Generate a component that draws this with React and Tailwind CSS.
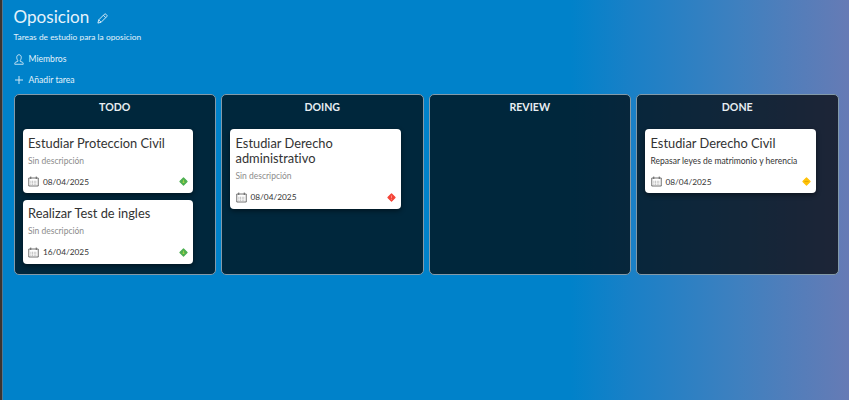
const PencilIcon = () => (
  <svg className="mt-[2px] h-[11px] w-[11px]" viewBox="0 0 24 24" fill="none" stroke="currentColor" strokeWidth="2" strokeLinejoin="round">
    <path d="M2 22 3.8 15 16 2.8Q18 1 20 3L21.2 4.2Q23 6 21.2 8L9 20.2Z" />
    <path d="M14 5 19 10M3.8 15 9 20.2" />
  </svg>
);

const PersonIcon = () => (
  <svg className="h-[11px] w-[10px]" viewBox="0 0 20 22" fill="none" stroke="currentColor" strokeWidth="1.7" strokeLinejoin="round">
    <path d="M7.5 12.5C5.800 10.500 5.500 8.500 5.500 6.500 5.500 3.500 7.300 1.500 10 1.500s4.500 2 4.500 5c0 2-.3 4-2 6v2.200l4 1.600c1.600.7 2 1.700 2 4.200h-17c0-2.500.4-3.500 2-4.200l4-1.600Z" />
  </svg>
);

const PlusIcon = () => (
  <svg className="h-[10px] w-[10px]" viewBox="0 0 10 10" fill="none" stroke="currentColor" strokeWidth="0.9">
    <path d="M5 1v8M1 5h8" />
  </svg>
);

const CalendarIcon = () => (
  <svg className="h-[11px] w-[11px] shrink-0 text-[#444]" viewBox="0 0 22 22" fill="none" stroke="currentColor" strokeWidth="1.5">
    <path d="M1.500 4h19v16h-19ZM5.500 1v5M16.500 1v5" />
    <path d="M5 10.500h12M5 13.500h12M5 16.500h12" strokeWidth="1" strokeDasharray="1.600 1.700" />
  </svg>
);

const PriorityIcon = ({ level }) => {
  const fill = { low: "#4caf50", high: "#f44336", medium: "#ffc107" }[level];
  return (
    <svg className="h-[9px] w-[9px]" viewBox="0 0 18 18">
      <path d="M9 2 16 9 9 16 2 9Z" fill={fill} stroke={fill} strokeWidth="2.500" strokeLinejoin="round" />
      {level === "low" && <path d="M9 5.500v6M7 9.500l2 2.500 2-2.500" fill="none" stroke="#c0dc45" strokeWidth="1.400" />}
      {level === "high" && <path d="M9 5v5M9 11.500v2" stroke="#ffb0a8" strokeWidth="1.300" />}
      {level === "medium" && <path d="M5 9h8" stroke="#d69d00" strokeWidth="1.300" />}
    </svg>
  );
};

const columns = [
  {
    name: "TODO",
    tasks: [
      { title: "Estudiar Proteccion Civil", date: "08/04/2025", level: "low" },
      { title: "Realizar Test de ingles", date: "16/04/2025", level: "low" },
    ],
  },
  { name: "DOING", tasks: [{ title: "Estudiar Derecho administrativo", date: "08/04/2025", level: "high" }] },
  { name: "REVIEW", tasks: [] },
  {
    name: "DONE",
    tasks: [
      {
        title: "Estudiar Derecho Civil",
        description: "Repasar leyes de matrimonio y herencia",
        date: "08/04/2025",
        level: "medium",
      },
    ],
  },
];

function TaskCard({ task }) {
  return (
    <article className="w-[170.500px] rounded-[4px] bg-white pt-[6.500px] pr-[4.500px] pb-[5.500px] pl-[5.500px] text-[#333] shadow-[0_2px_5px_rgba(0,0,0,0.45)]">
      <h3 className="text-[12.850px] leading-[15.500px]">{task.title}</h3>
      <p className={`mt-[3.500px] text-[8.500px] leading-[12px] whitespace-nowrap ${task.description ? "" : "text-[#8c8c8c]"}`}>
        {task.description || "Sin descripción"}
      </p>
      <div className="mt-[9px] flex h-[12px] items-center">
        <CalendarIcon />
        <span className="ml-[4px] text-[8.300px] leading-[12px]">{task.date}</span>
        <span className="mr-[0.500px] ml-auto">
          <PriorityIcon level={task.level} />
        </span>
      </div>
    </article>
  );
}

export default function App() {
  return (
    <div className="flex h-[400px] w-[849px] overflow-hidden font-['Lato',sans-serif] [font-variant-ligatures:none]">
      <div className="w-[3px] shrink-0 border-r border-[#56788f] bg-[#393431]" />
      <main className="flex-1 bg-[linear-gradient(90deg,#0082ca_0%,#0082ca_67%,#1980c7_74%,#3f80bf_87%,#667bb5_100%)] pl-[10.500px] text-white">
        <header className="flex h-[94px] flex-col text-[#e4f2fa]">
          <div className="flex h-[32px] items-center gap-[8px] pt-[2px]">
            <h1 className="text-[17.100px] leading-[20px]">Oposicion</h1>
            <PencilIcon />
          </div>
          <p className="h-[20.500px] text-[8.400px] leading-[11px]">Tareas de estudio para la oposicion</p>
          <button className="flex h-[13px] items-center gap-[5px] text-[8.600px]">
            <PersonIcon />
            Miembros
          </button>
          <button className="mt-[8px] flex h-[13px] items-center gap-[5px] text-[8.600px]">
            <PlusIcon />
            Añadir tarea
          </button>
        </header>
        <div className="flex gap-[5px]">
          {columns.map((column) => (
            <section key={column.name} className="h-[181px] w-[202.500px] shrink-0 rounded-[5px] border border-[#839aa9] bg-black/70 px-[8px]">
              <h2 className="mt-[5px] h-[29px] text-center text-[10.600px] leading-[14px] font-bold text-[#e8eef2]">{column.name}</h2>
              <div className="flex flex-col gap-[6.500px]">
                {column.tasks.map((task) => (
                  <TaskCard key={task.title} task={task} />
                ))}
              </div>
            </section>
          ))}
        </div>
      </main>
    </div>
  );
}
